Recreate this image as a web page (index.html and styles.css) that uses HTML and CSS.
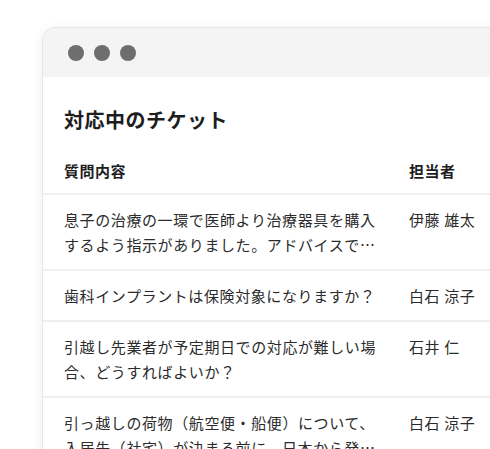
FILE: index.html
```html
<!DOCTYPE html>
<html lang="ja">

<head>
    <meta charset="UTF-8">
    <title>対応中のチケット</title>
    <link rel="stylesheet" href="styles.css">
</head>

<body>
    <div class="stage">
        <div class="window">
            <div class="titlebar">
                <span class="dot"></span>
                <span class="dot"></span>
                <span class="dot"></span>
            </div>

            <div class="content">
                <h2 class="title">対応中のチケット</h2>

                <div class="ticket-head">
                    <span>質問内容</span>
                    <span>担当者</span>
                </div>

                <div class="ticket">
                    <p class="question">息子の治療の一環で医師より治療器具を購入するよう指示がありました。アドバイスできることはありますか？</p>
                    <span class="owner">伊藤 雄太</span>
                </div>
                <div class="ticket">
                    <p class="question">歯科インプラントは保険対象になりますか？</p>
                    <span class="owner">白石 涼子</span>
                </div>
                <div class="ticket">
                    <p class="question">引越し先業者が予定期日での対応が難しい場合、どうすればよいか？</p>
                    <span class="owner">石井 仁</span>
                </div>
                <div class="ticket">
                    <p class="question">引っ越しの荷物（航空便・船便）について、入居先（社宅）が決まる前に、日本から発送してもよいですか？</p>
                    <span class="owner">白石 涼子</span>
                </div>
            </div>
        </div>
    </div>
</body>

</html>
```

FILE: styles.css
```css
body,
h2,
p {
    margin: 0;
    padding: 0;
}

body {
    background: #fff;
    overflow: hidden;
    font-family: "Noto Sans CJK JP", "Noto Sans", sans-serif;
    color: #2b2b2b;
}

.stage {
    padding: 27px 0 0 42px;
}

.window {
    width: 480px;
    background: #fff;
    border: 1px solid #e6e6e6;
    border-right: none;
    border-radius: 14px 0 0 0;
    box-shadow: 0 2px 12px rgba(0, 0, 0, 0.07);
    overflow: hidden;
}

.titlebar {
    height: 49px;
    background: #f4f4f4;
    display: flex;
    align-items: center;
    gap: 10px;
    padding-left: 25px;
}

.dot {
    width: 16px;
    height: 16px;
    border-radius: 50%;
    background: #6e6e6e;
}

.content {
    padding-top: 29px;
}

.title {
    margin-left: 21px;
    font-size: 20px;
    line-height: 28px;
    letter-spacing: 0.5px;
    font-weight: bold;
    color: #1e1e1e;
}

.ticket-head,
.ticket {
    display: grid;
    grid-template-columns: 320px 1fr;
    column-gap: 25px;
    padding-left: 21px;
    font-size: 15px;
    line-height: 25px;
    letter-spacing: 0.6px;
}

.ticket-head {
    margin-top: 24px;
    padding-bottom: 10px;
    font-weight: bold;
    letter-spacing: 0.5px;
    color: #1e1e1e;
}

.ticket {
    border-top: 2px solid #efefef;
    padding-top: 12px;
    padding-bottom: 12px;
}

.question {
    display: -webkit-box;
    -webkit-box-orient: vertical;
    -webkit-line-clamp: 2;
    overflow: hidden;
}

.owner {
    white-space: nowrap;
}
```
